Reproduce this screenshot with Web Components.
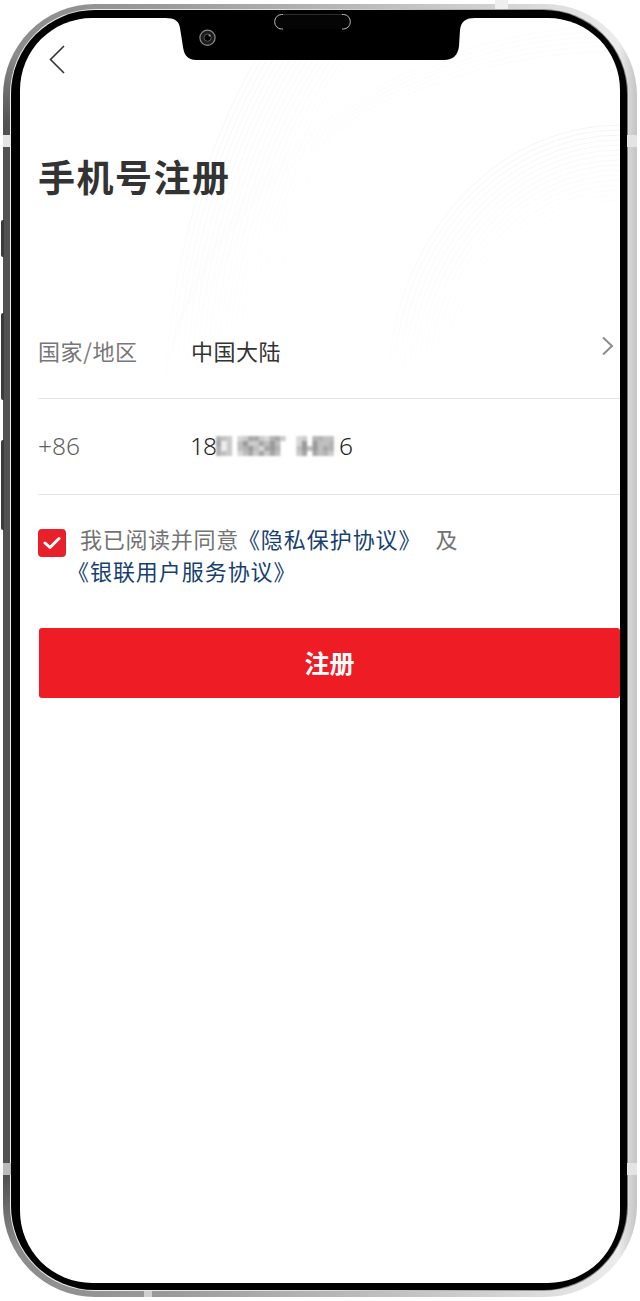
<!DOCTYPE html>
<html lang="zh">
<head>
<meta charset="utf-8">
<title>手机号注册</title>
<style>
  html, body { margin: 0; padding: 0; background: #fff; }
  body { font-family: "Noto Sans CJK SC", "Noto Sans", sans-serif; }
</style>
</head>
<body>
<phone-frame>
  <register-page>
    <form-row label="国家/地区" slot="rows" chevron>中国大陆</form-row>
    <form-row label="+86" slot="rows" wide><phone-number></phone-number></form-row>
  </register-page>
</phone-frame>

<script>
// phone body: metal edge, black bezel, notch, white screen
class PhoneFrame extends HTMLElement {
  constructor() {
    super();
    this.attachShadow({ mode: 'open' });
    this.shadowRoot.innerHTML = `<style>
:host { display: block; width: 640px; height: 1301px; box-sizing: border-box; padding: 4px 3px 4px 3px; }
.metal {
  position: relative; height: 100%; box-sizing: border-box; padding: 5px 9px 6px 7px;
  border-radius: 92px;
  background:
    linear-gradient(180deg, transparent 50px, #525252 120px, #525252 calc(100% - 120px), transparent calc(100% - 50px)) left top / 14px 100% no-repeat,
    linear-gradient(90deg, #8a8a8a 0, #9a9a9a 25%, #b4b4b4 50%, #d2d2d2 78%, #ececec 97%, #c4c4c4 100%);
}
.ring { height: 100%; box-sizing: border-box; padding: 1px; border-radius: 85px;
  background: linear-gradient(90deg, #eee 0, #ddd 50%, #777 100%); }
.bezel { position: relative; height: 100%; box-sizing: border-box; padding: 8px 7px 7px 9px; border-radius: 84px; background: #000; }
.screen { position: relative; height: 100%; background: #fff; border-radius: 72px; overflow: hidden; }
.notch { position: absolute; left: 154px; top: 0; display: block; }
.band { position: absolute; background: #e4e4e4; }
.btn { position: absolute; left: -2px; width: 3px; background: #3c3c3c; border-radius: 2px 0 0 2px; }
</style>
<div class="metal">
  <div class="ring"><div class="bezel">
    <div class="screen"><slot></slot></div>
    <svg class="notch" width="320" height="52" viewBox="165 10 320 52" aria-hidden="true">
      <path d="M165 10 L475 10 L475 18 C466 18 461 21 460 30 L459 46 C458 55 453 60 444 60 L196 60 C188 60 184 55 183 47 L180 28 C179 21 175 18 165 18 Z" fill="#000"/>
      <rect x="275" y="14.5" width="75" height="14.5" rx="7.2" fill="#050505"/>
      <path d="M283 14.5 H281.5 A6.8 7.2 0 0 0 281.5 29 H283 M342 14.5 H343.5 A6.8 7.2 0 0 1 343.5 29 H342" fill="none" stroke="#b8b8b8" stroke-width="1"/>
      <path d="M283 14.5 H342" stroke="#3a3a3a" stroke-width=".8"/>
      <circle cx="207.5" cy="37.7" r="7.6" fill="#1b1b1b" stroke="#8a8a8a" stroke-width="1.2"/>
      <circle cx="207.5" cy="37.7" r="3.6" fill="#000" stroke="#555" stroke-width="1"/>
      <circle cx="209.5" cy="35.5" r="1" fill="#999"/>
    </svg>
  </div></div>
  <i class="band" style="left:0;top:131px;width:8px;height:12px"></i>
  <i class="band" style="left:0;top:1159px;width:8px;height:12px;background:#bbb"></i>
  <i class="band" style="right:0;top:131px;width:10px;height:12px"></i>
  <i class="band" style="right:0;top:1159px;width:10px;height:12px"></i>
  <i class="band" style="left:492px;top:-4px;width:13px;height:9px;background:#efefef"></i>
  <i class="band" style="left:141px;bottom:0;width:8px;height:6px;background:#d0d0d0"></i>
  <i class="btn" style="top:216px;height:37px"></i>
  <i class="btn" style="top:309px;height:87px"></i>
  <i class="btn" style="top:436px;height:90px"></i>
</div>`;
  }
}
customElements.define('phone-frame', PhoneFrame);

// faint ring pattern behind the form
class RingBackdrop extends HTMLElement {
  constructor() {
    super();
    this.attachShadow({ mode: 'open' });
    let rings = '';
    for (let i = 0; i < 22; i++) {
      const o = (0.55 - i * 0.022).toFixed(3);
      rings += `<ellipse cx="580" cy="402" rx="${435 - i * 5}" ry="${590 - i * 5}" stroke-opacity="${o}"/>`;
    }
    for (let i = 0; i < 16; i++) {
      const o = (0.7 - i * 0.035).toFixed(3);
      rings += `<ellipse cx="600" cy="372" rx="${232 - i * 5}" ry="${265 - i * 5}" stroke-opacity="${o}"/>`;
    }
    for (let i = 0; i < 6; i++) {
      rings += `<ellipse cx="600" cy="420" rx="460" ry="${412 - i * 5}" stroke-opacity=".16"/>`;
    }
    this.shadowRoot.innerHTML = `<style>
:host { position: absolute; left: 0; top: 0; display: block; pointer-events: none; }
svg { display: block; -webkit-mask-image: linear-gradient(180deg, #000 30%, rgba(0,0,0,.45) 75%, transparent 100%); mask-image: linear-gradient(180deg, #000 30%, rgba(0,0,0,.45) 75%, transparent 100%); }
</style>
<svg width="600" height="380" viewBox="0 0 600 380" fill="none" stroke="#ecebea" stroke-width=".8" aria-hidden="true">${rings}</svg>`;
  }
}
customElements.define('ring-backdrop', RingBackdrop);

// one line of the form: label column, value, optional chevron
class FormRow extends HTMLElement {
  constructor() {
    super();
    this.attachShadow({ mode: 'open' });
    const chev = this.hasAttribute('chevron')
      ? `<svg class="chev" width="12" height="20" viewBox="0 0 12 20"><path d="M1 1.5 L10 10 L1 18.5" fill="none" stroke="#8c8c8c" stroke-width="2"/></svg>`
      : '';
    const wide = this.hasAttribute('wide');
    this.shadowRoot.innerHTML = `<style>
:host { display: block; }
.row { display: flex; align-items: center; height: 95px; border-bottom: 1px solid #e6e6e6; position: relative; }
.label { width: ${wide ? 152 : 153}px; flex: none; color: ${wide ? '#5f5f5f' : '#777'}; margin-top: -2px; font: ${wide ? '300 24.5px "Noto Sans"' : '22px "Noto Sans CJK SC"'}, sans-serif; letter-spacing: ${wide ? 0 : .6}px; }
.value { flex: 1; color: #333; margin-top: -2px; font-size: 22px; letter-spacing: .5px; }
.chev { flex: none; margin-right: 6px; margin-top: -9px; }
</style>
<div class="row"><span class="label">${this.getAttribute('label')}</span><span class="value"><slot></slot></span>${chev}</div>`;
  }
}
customElements.define('form-row', FormRow);

// phone number with its middle digits pixelated out
class PhoneNumber extends HTMLElement {
  constructor() {
    super();
    this.attachShadow({ mode: 'open' });
    const grid = [
      '65403477436740034066550',
      '71405844758500038085560',
      '61405685378600058585760',
      '65403574747500047075640'
    ];
    let cells = '';
    grid.forEach((row, y) => {
      [...row].forEach((v, x) => {
        if (v === '0') return;
        const g = 250 - Number(v) * 12;
        cells += `<rect x="${x * 5.4}" y="${y * 5}" width="5.5" height="5.1" fill="rgb(${g},${g},${g})"/>`;
      });
    });
    this.shadowRoot.innerHTML = `<style>
:host { display: inline-flex; align-items: center; font: 300 24.5px "Noto Sans", sans-serif; color: #222; }
svg { display: block; filter: blur(.8px); }
.lead { letter-spacing: -1px; }
</style>
<span class="lead">18</span><svg width="123" height="20" viewBox="0 0 124 20" aria-hidden="true">${cells}</svg><span>6</span>`;
  }
}
customElements.define('phone-number', PhoneNumber);

// red tick box with the agreement text
class AgreeLine extends HTMLElement {
  constructor() {
    super();
    this.attachShadow({ mode: 'open' });
    this.shadowRoot.innerHTML = `<style>
:host { display: flex; align-items: flex-start; }
.box { flex: none; width: 28px; height: 28px; border-radius: 4px; background: #e8202a; display: flex; align-items: center; justify-content: center; }
.text { margin-left: 2px; font-size: 22px; letter-spacing: .7px; line-height: 32px; color: #737373; text-indent: 12px; margin-top: -7px; white-space: nowrap; }
a { color: #173f70; text-decoration: none; letter-spacing: .95px; margin-left: -1px; }
.and { margin-left: 14px; }
</style>
<span class="box"><svg width="18" height="14" viewBox="0 0 18 14"><path d="M2 7 L7 11.5 L16 2.5" fill="none" stroke="#fff" stroke-width="3" stroke-linecap="round" stroke-linejoin="round"/></svg></span>
<div class="text">我已阅读并同意<a>《隐私保护协议》</a><span class="and">及</span><br><a>《银联用户服务协议》</a></div>`;
  }
}
customElements.define('agree-line', AgreeLine);

class PrimaryButton extends HTMLElement {
  constructor() {
    super();
    this.attachShadow({ mode: 'open' });
    this.shadowRoot.innerHTML = `<style>
:host { display: flex; align-items: center; justify-content: center; height: 70px; background: #ee1c25; border-radius: 3px; color: #fff; font-size: 25px; font-weight: 700; padding-bottom: 2px; box-sizing: border-box; }
</style><slot></slot>`;
  }
}
customElements.define('primary-button', PrimaryButton);

// the register screen itself
class RegisterPage extends HTMLElement {
  constructor() {
    super();
    this.attachShadow({ mode: 'open' });
    this.shadowRoot.innerHTML = `<style>
:host { display: block; height: 100%; position: relative; }
.page { position: relative; display: flex; flex-direction: column; padding: 27px 0 0 18px; }
.back { display: block; margin-left: 11px; }
h1 { margin: 76px 0 102px; font-size: 37px; line-height: 50px; letter-spacing: 1.5px; font-weight: 700; color: #333; }
agree-line { margin-top: 34px; }
primary-button { margin: 42px 0 0 1px; }
</style>
<ring-backdrop></ring-backdrop>
<div class="page">
  <svg class="back" width="16" height="30" viewBox="0 0 16 30"><path d="M15 1 L1.5 14.5 L15 28" fill="none" stroke="#333" stroke-width="1.6"/></svg>
  <h1>手机号注册</h1>
  <slot name="rows"></slot>
  <agree-line></agree-line>
  <primary-button>注册</primary-button>
</div>`;
  }
}
customElements.define('register-page', RegisterPage);
</script>
</body>
</html>
